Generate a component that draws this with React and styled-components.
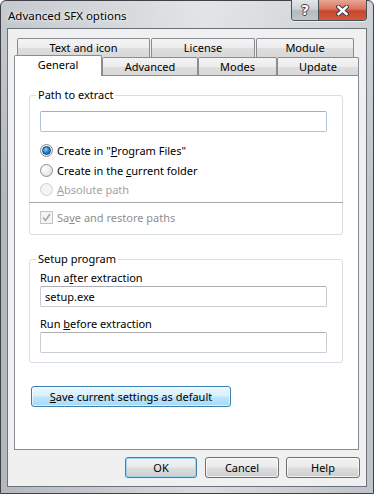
import React from 'react'
import styled, { createGlobalStyle, css } from 'styled-components'

const GlobalStyle = createGlobalStyle`
    html, body {
        margin:0;
        padding:0;
        background:#ffffff;
    }
    body {
        font-family:"Noto Sans", "Liberation Sans", sans-serif;
        font-size:11px;
        color:#000;
    }
    * { box-sizing:border-box; }
`

const Window = styled.div`
    width:374px;
    height:494px;
    border:1px solid #3e4246;
    border-radius:6px 6px 0 0;
    background:
        linear-gradient(180deg, rgba(255,255,255,0.25) 0%, rgba(255,255,255,0) 40%),
        linear-gradient(90deg, #b3b8bf 0%, #c8ccd1 30%, #dadcdf 55%, #cdd1d5 75%, #bfc4ca 100%);
    display:flex;
    flex-direction:column;
    padding:0 6px 6px;
`

const TitleBar = styled.div`
    height:27px;
    display:flex;
    align-items:flex-start;
`

const Title = styled.div`
    padding:7px 0 0 1px;
    line-height:16px;
    font-size:11.5px;
    color:#000;
    text-shadow:0 0 6px rgba(255,255,255,0.9), 0 0 2px rgba(255,255,255,0.8);
`

const Caption = styled.div`
    margin-left:auto;
    margin-top:-1px;
    display:flex;
    border:1px solid #4b5056;
    border-top:none;
    border-radius:0 0 4px 4px;
    overflow:hidden;
    box-shadow:0 1px 0 rgba(255,255,255,0.6);
`

const CaptionButton = styled.div`
    height:20px;
    width:${p => p.$w}px;
    display:flex;
    align-items:center;
    justify-content:center;
    ${p => p.$close ? css`
        background:linear-gradient(180deg, #e8a796 0%, #d9755d 45%, #c7462c 55%, #d15b3c 100%);
    ` : css`
        background:linear-gradient(180deg, #e4e6e9 0%, #cdd1d6 45%, #b4b9c0 55%, #c3c8ce 100%);
        border-right:1px solid #4b5056;
    `}
`

const HelpGlyph = styled.span`
    font-family:"DejaVu Sans", sans-serif;
    font-weight:bold;
    font-size:14px;
    line-height:14px;
    color:#fff;
    text-shadow:-1px 0 #3d4248, 1px 0 #3d4248, 0 -1px #3d4248, 0 1px #3d4248;
`

const Client = styled.div`
    flex:1;
    border:1px solid #6c7279;
    background:#f0f0f0;
    display:flex;
    flex-direction:column;
    padding:9px 7px 8px 6px;
`

const TabRow = styled.div`
    display:flex;
    gap:${p => p.$gap || 0}px;
    padding:${p => p.$back ? '0 4px 0 3px' : '0'};
    height:${p => p.$back ? 19 : 18}px;
`

const Tab = styled.div`
    width:${p => p.$w}px;
    border:1px solid #898c95;
    border-bottom:none;
    border-radius:2px 2px 0 0;
    display:flex;
    justify-content:center;
    align-items:center;
    line-height:14px;
    background:linear-gradient(180deg, #f4f4f4 0%, #ececec 50%, #dedede 52%, #d8d8d8 100%);
    ${p => p.$active && css`
        position:relative;
        z-index:2;
        background:#ffffff;
        margin-top:-2px;
        height:21px;
        align-items:flex-start;
        padding-top:2px;
    `}
`

const Panel = styled.div`
    height:375px;
    border:1px solid #898c95;
    background:#ffffff;
    display:flex;
    flex-direction:column;
    align-items:flex-start;
    padding:0 14px 0 14px;
`

const Group = styled.fieldset`
    margin:${p => p.$top}px 0 0 0;
    width:314px;
    border:1px solid #d5dfe5;
    border-radius:3px;
    padding:${p => p.$pad};
    min-width:0;
`

const Legend = styled.legend`
    margin-left:-4px;
    padding:0 2px;
    line-height:16px;
`

const TextBox = styled.div`
    width:287px;
    height:21px;
    border:1px solid ${p => p.$focus ? '#a8c5e2' : '#c9ccd3'};
    border-top-color:${p => p.$focus ? '#8fb3d8' : '#abadb3'};
    border-radius:2px;
    background:#fff;
    padding:0 4px;
    display:flex;
    align-items:center;
    line-height:14px;
`

const Options = styled.div`
    margin-top:8px;
    display:flex;
    flex-direction:column;
`

const Option = styled.div`
    height:${p => p.$h || 20}px;
    margin-top:${p => p.$top || 0}px;
    display:flex;
    align-items:center;
    gap:4px;
    color:${p => p.$dim || '#000'};
`

const Radio = styled.span`
    width:13px;
    height:13px;
    border-radius:50%;
    border:1px solid ${p => p.$disabled ? '#cfcfcf' : '#8e8f8f'};
    background:${p => p.$disabled
        ? '#f4f4f4'
        : 'radial-gradient(circle at 35% 35%, #ffffff 0%, #eaeaea 55%, #d2d2d2 100%)'};
    display:flex;
    align-items:center;
    justify-content:center;
    &::after {
        content:"";
        display:${p => p.$checked ? 'block' : 'none'};
        width:7px;
        height:7px;
        border-radius:50%;
        background:radial-gradient(circle at 40% 35%, #8ad8fb 0%, #2a8ad4 45%, #0e4f9a 100%);
        border:1px solid #16447c;
    }
`

const Check = styled.span`
    width:13px;
    height:13px;
    border:1px solid #c4c4c4;
    background:#f4f4f4;
    display:flex;
    align-items:center;
    justify-content:center;
`

const Separator = styled.div`
    height:1px;
    background:#a9a9a9;
    margin:3px -16px 0 -11px;
`

const FieldLabel = styled.div`
    line-height:16px;
    margin-top:${p => p.$top || 0}px;
`

const Button = styled.div`
    width:${p => p.$w}px;
    height:21px;
    border:1px solid #707070;
    border-radius:3px;
    display:flex;
    align-items:center;
    justify-content:center;
    line-height:14px;
    background:linear-gradient(180deg, #f2f2f2 0%, #ebebeb 48%, #dddddd 52%, #cfcfcf 100%);
    box-shadow:inset 0 0 0 1px rgba(255,255,255,0.7);
    ${p => p.$default && css`
        border-color:#3c7fb1;
        box-shadow:inset 0 0 0 1px #9fd6f5;
    `}
    ${p => p.$hot && css`
        border-color:#3c7fb1;
        background:linear-gradient(180deg, #eaf6fd 0%, #d9f0fc 48%, #bee6fd 52%, #a7d9f5 100%);
        box-shadow:inset 0 0 0 1px rgba(255,255,255,0.6);
    `}
`

const SaveButton = styled(Button)`
    margin:23px 0 0 2px;
`

const ButtonRow = styled.div`
    margin-top:7px;
    margin-right:-1px;
    display:flex;
    justify-content:flex-end;
    gap:8px;
    & > :last-child { margin-left:-1px; }
`

export default function App() {
    return (
        <>
            <GlobalStyle />
            <Window>
                <TitleBar>
                    <Title>Advanced SFX options</Title>
                    <Caption>
                        <CaptionButton $w={27}><HelpGlyph>?</HelpGlyph></CaptionButton>
                        <CaptionButton $w={47} $close>
                            <svg width="13" height="11" viewBox="0 0 13 11">
                                <path d="M2.5 2 L10.5 9 M10.5 2 L2.5 9" stroke="#3d4248" strokeWidth="4.6" strokeLinecap="square" />
                                <path d="M2.5 2 L10.5 9 M10.5 2 L2.5 9" stroke="#ffffff" strokeWidth="2.4" strokeLinecap="square" />
                            </svg>
                        </CaptionButton>
                    </Caption>
                </TitleBar>
                <Client>
                    <TabRow $back $gap={1}>
                        <Tab $w={133}>Text and icon</Tab>
                        <Tab $w={104}>License</Tab>
                        <Tab $w={98}>Module</Tab>
                    </TabRow>
                    <TabRow>
                        <Tab $w={88} $active>General</Tab>
                        <Tab $w={96}>Advanced</Tab>
                        <Tab $w={79}>Modes</Tab>
                        <Tab $w={82}>Update</Tab>
                    </TabRow>
                    <Panel>
                        <Group $top={11} $pad="8px 15px 8px 10px">
                            <Legend>Path to extract</Legend>
                            <TextBox $focus />
                            <Options>
                                <Option>
                                    <Radio $checked />
                                    <span>Create in "<u>P</u>rogram Files"</span>
                                </Option>
                                <Option>
                                    <Radio />
                                    <span>Create in the <u>c</u>urrent folder</span>
                                </Option>
                                <Option $h={19} $dim="#a3a3a3">
                                    <Radio $disabled />
                                    <span><u>A</u>bsolute path</span>
                                </Option>
                            </Options>
                            <Separator />
                            <Option $h={18} $top={5} $dim="#8f8f8f">
                                <Check>
                                    <svg width="9" height="9" viewBox="0 0 9 9">
                                        <path d="M1 4.5 L3.5 7.5 L8 1" fill="none" stroke="#a6a6a6" strokeWidth="1.6" />
                                    </svg>
                                </Check>
                                <span>Sa<u>v</u>e and restore paths</span>
                            </Option>
                        </Group>
                        <Group $top={16} $pad="3px 15px 9px 10px">
                            <Legend>Setup program</Legend>
                            <FieldLabel>Run a<u>f</u>ter extraction</FieldLabel>
                            <TextBox>setup.exe</TextBox>
                            <FieldLabel $top={9}>Run <u>b</u>efore extraction</FieldLabel>
                            <TextBox />
                        </Group>
                        <SaveButton $w={200} $hot><span><u>S</u>ave current settings as default</span></SaveButton>
                    </Panel>
                    <ButtonRow>
                        <Button $w={72} $default>OK</Button>
                        <Button $w={74}>Cancel</Button>
                        <Button $w={74}>Help</Button>
                    </ButtonRow>
                </Client>
            </Window>
        </>
    )
}
